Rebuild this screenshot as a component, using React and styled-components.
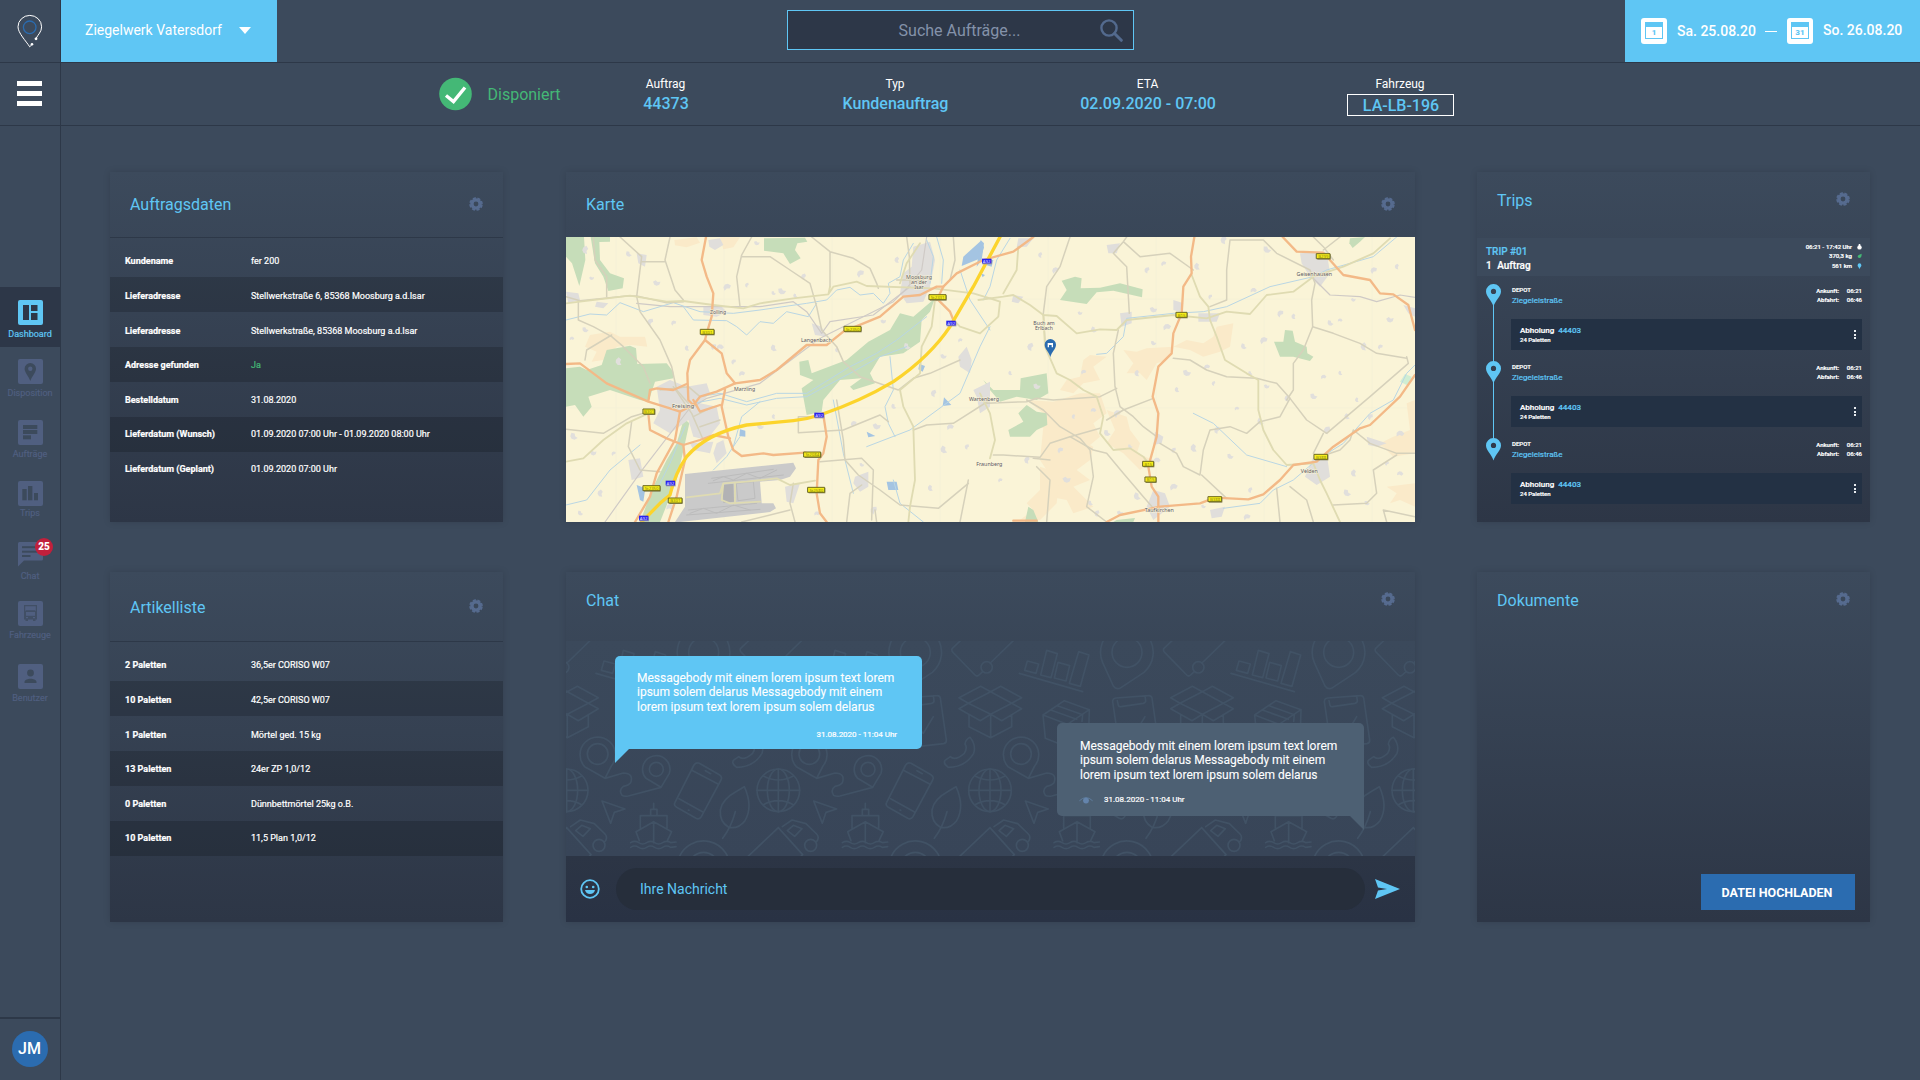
import React from 'react';
import styled, { createGlobalStyle, css } from 'styled-components';

const c = {
  bg: '#3c4a5c',
  line: '#2d3848',
  deep: '#2d3748',
  sky: '#5fc6f4',
  blue: '#2b6cb0',
  green: '#44b876',
  muted: '#505f80',
  gear: '#566b8f',
};

const Global = createGlobalStyle`
  * { box-sizing: border-box; }
  body { margin: 0; background: ${c.bg}; color: #fff; font-family: Roboto, "Liberation Sans", sans-serif; }
  svg { display: block; flex: none; }
`;

/* thickens the smallest type without changing its width */
const crisp = css`-webkit-text-stroke: 0.2px currentColor;`;

/* ---------- shell ---------- */
const Shell = styled.div`display: flex; width: 1920px; height: 1080px; overflow: hidden;`;
const Sidebar = styled.aside`
  width: 61px; flex: none; display: flex; flex-direction: column; border-right: 1px solid ${c.line};
`;
const SideCell = styled.div`
  height: 63px; border-bottom: 1px solid ${c.line}; padding: ${(p) => p.$pad};
`;
const Burger = styled.div`
  width: 25px; height: 25px; display: flex; flex-direction: column; justify-content: space-between;
`;
const BurgerBar = styled.span`height: 5px; background: #fff;`;
const Nav = styled.nav`
  margin-top: 161px; display: grid; grid-template-rows: 60px 61px 61px 61px 59px 63px 60px;
`;
const NavItem = styled.div`
  display: flex; flex-direction: column; align-items: center;
  padding-top: ${(p) => (p.$active ? 13 : 12)}px;
  color: ${(p) => (p.$active ? c.sky : c.muted)};
  background: ${(p) => (p.$active ? c.deep : 'transparent')};
`;
const NavIcon = styled.div`position: relative; width: 25px; height: 25px; margin-left: 1px;`;
const NavLabel = styled.span`
  font-size: 9px; line-height: 12px; margin-top: ${(p) => p.$gap ?? 3}px; white-space: nowrap; ${crisp}
`;
const Badge = styled.span`
  position: absolute; left: 17px; top: -4px; width: 18px; height: 18px; border-radius: 50%;
  background: #c1203c; color: #fff; font-size: 10px; font-weight: 900; line-height: 18px; text-align: center;
`;
const UserCell = styled.div`
  margin-top: auto; height: 63px; border-top: 2px solid ${c.line}; display: flex; justify-content: center; padding: 12px 1px 0 0;
`;
const Avatar = styled.div`
  width: 36px; height: 36px; border-radius: 50%; background: ${c.blue};
  font-size: 16px; font-weight: 500; line-height: 36px; text-align: center;
`;
const Content = styled.div`flex: 1; display: flex; flex-direction: column;`;

/* ---------- top bar ---------- */
const TopBar = styled.header`height: 63px; display: flex; border-bottom: 1px solid ${c.line};`;
const Company = styled.div`
  width: 216px; background: ${c.sky}; display: flex; align-items: center; gap: 17px; padding: 0 0 2px 24px;
  font-size: 14px; white-space: nowrap;
`;
const Search = styled.div`
  margin: 10px 0 0 510px; width: 347px; height: 40px; background: ${c.deep}; border: 1px solid ${c.sky};
  display: flex; align-items: center; padding: 0 10px 0 31px;
`;
const Placeholder = styled.span`flex: 1; text-align: center; font-size: 16px; color: #8492aa;`;
const Dates = styled.div`
  margin-left: auto; width: 295px; background: ${c.sky}; display: flex; padding-left: 16px;
  font-size: 14px; font-weight: 500;
`;
const DateText = styled.span`
  width: ${(p) => p.$w}px; flex: none; line-height: 16px; margin: ${(p) => p.$top}px 0 0 10px; white-space: nowrap;
`;
const Calendar = styled.div`
  width: 26px; height: 26px; margin-top: 18px; border-radius: 3px; background: #fff; padding: 4px; flex: none;
`;
const CalendarSheet = styled.div`
  height: 17px; border: 1px solid ${c.sky}; border-top-width: 5px;
  color: ${c.sky}; font-size: 8px; font-weight: 900; line-height: 11px; text-align: center;
`;
const Dash = styled.span`width: 12px; height: 1px; flex: none; background: #fff; margin: 31px 10px 0 10px;`;

/* ---------- order info ---------- */
const InfoBar = styled.section`
  height: 63px; border-bottom: 1px solid ${c.line};
  display: grid; grid-template-columns: 490px 230px 229px 276px 229px;
`;
const Status = styled.div`
  display: flex; gap: 15.5px; padding: 14px 0 0 378px; color: ${c.green}; font-size: 16px; line-height: 35px;
`;
const InfoCell = styled.div`display: flex; flex-direction: column; align-items: center; padding-top: 14px;`;
const InfoLabel = styled.span`font-size: 12px; line-height: 14px; margin-right: 1px;`;
const InfoValue = styled.span`
  margin-top: 3px; font-size: 16px; font-weight: 500; line-height: 19px; color: ${c.sky}; white-space: nowrap;
  ${(p) => p.$boxed && css`width: 107px; height: 22px; line-height: 21px; border: 1px solid #fff; text-align: center; padding-left: 1px;`}
`;

/* ---------- cards ---------- */
const Board = styled.main`
  padding: 46px 0 0 49px; display: grid; grid-template-columns: 394px 849px 393px; grid-template-rows: 350px 350px;
  column-gap: 62px; row-gap: 50px;
`;
const Card = styled.section`
  width: ${(p) => p.$w}px; display: flex; flex-direction: column;
  background: linear-gradient(#3c4a5c, #2d3646); box-shadow: 0 0 7px rgba(0, 0, 0, 0.13);
`;
const CardHead = styled.div`
  height: ${(p) => p.$h}px; flex: none; display: flex; justify-content: space-between; align-items: flex-start; padding: 0 20px;
`;
const CardTitle = styled.h2`
  margin: 0; font-size: 16px; font-weight: 400; color: ${c.sky}; line-height: ${(p) => p.$lh}px;
`;
const GearBox = styled.span`margin-top: ${(p) => p.$top}px;`;
const Table = styled.div`border-top: 1px solid ${c.line}; font-size: 9px; line-height: 10px; ${crisp}`;
const TableRow = styled.div`
  display: grid; grid-template-columns: 126px 1fr; padding-left: 15px;
  height: ${(p) => (p.$i ? 35 : 39)}px;
  padding-top: ${(p) => (p.$i ? 14 - Math.floor((p.$i - 1) / 2) : 18)}px;
  background: ${(p) => (p.$i % 2 ? 'rgba(0,0,0,0.17)' : 'transparent')};
`;
const RowLabel = styled.span`font-weight: 700;`;
const RowValue = styled.span`color: ${(p) => (p.$ok ? c.green : '#fff')};`;

/* ---------- trips ---------- */
const TripHead = styled.div`
  height: 38px; background: ${c.bg}; display: flex; justify-content: space-between; padding: 0 8px 0 9px;
`;
const TripName = styled.div`
  padding-top: 7px; font-size: 10px; font-weight: 500; line-height: 15px; ${crisp}
  b { display: block; font-weight: 500; color: ${c.sky}; line-height: 13px; }
  span { margin-left: 3px; }
`;
const TripFacts = styled.div`padding-top: 4px; font-size: 6px; font-weight: 500; line-height: 10px; ${crisp}`;
const Fact = styled.div`
  height: ${(p) => p.$h ?? 9}px; display: flex; justify-content: flex-end; align-items: center; gap: 5px;
`;
const Stops = styled.div`padding: 8px 8px 0 9px;`;
const Stop = styled.div`display: flex; height: 77px;`;
const Rail = styled.div`width: 15px; display: flex; flex-direction: column; align-items: center;`;
const RailLine = styled.span`width: 1px; height: 57px; background: ${c.sky}; margin-top: -2px;`;
const StopBody = styled.div`flex: 1; margin-left: 10px;`;
const StopTop = styled.div`display: flex; justify-content: space-between; height: 35px; padding-left: 1px;`;
const StopName = styled.div`
  padding-top: 2px; font-size: 6px; font-weight: 500; line-height: 7px; ${crisp}
  b { display: block; margin-top: 3px; font-size: 8px; font-weight: 400; line-height: 9px; color: ${c.sky}; }
`;
const Times = styled.div`
  display: grid; grid-template-columns: 23px 16px; column-gap: 7px; padding-top: 2px; text-align: right;
  font-size: 6px; font-weight: 500; line-height: 9px; align-content: start; white-space: nowrap; ${crisp}
`;
const Job = styled.div`
  height: 31px; background: #233144; display: flex; justify-content: space-between; padding: 7px 6px 0 9px;
  font-size: 8px; font-weight: 500; line-height: 9px; ${crisp}
`;
const JobNumber = styled.span`color: ${c.sky}; margin-left: 4px;`;
const JobNote = styled.div`font-size: 6px; font-weight: 500; line-height: 7px; margin-top: 1px;`;
const Dots = styled.div`
  display: flex; flex-direction: column; gap: 1.5px; padding-top: 4px;
  i { width: 2px; height: 2px; background: #e8ecf0; }
`;

/* ---------- chat ---------- */
const ChatArea = styled.div`
  position: relative; height: 215px; display: flex; flex-direction: column; padding: 15px 51px 0 49px;
  background: linear-gradient(#3b495b, #384558);
`;
const Wallpaper = styled.svg`position: absolute; inset: 0;`;
const Bubble = styled.div`
  position: relative; width: 307px; height: 93px; border-radius: 5px;
  font-size: 12px; line-height: 14.4px;
  background: ${(p) => (p.$own ? '#4d6073' : c.sky)};
  align-self: ${(p) => (p.$own ? 'flex-end' : 'flex-start')};
  ${(p) => (p.$own
    ? 'border-bottom-right-radius: 0; margin-top: -26px; padding: 16px 22px 0 23px;'
    : 'border-bottom-left-radius: 0; padding: 15px 22px 0 22px;')}
  &::after {
    content: ''; position: absolute; top: 93px; border-top: 14px solid ${(p) => (p.$own ? '#4d6073' : c.sky)};
    ${(p) => (p.$own ? 'right: 0; border-left: 14px solid transparent;' : 'left: 0; border-right: 14px solid transparent;')}
  }
`;
const Line = styled.div`white-space: nowrap; -webkit-text-stroke: 0.1px #fff;`;
const Stamp = styled.div`
  display: flex; align-items: center; gap: 11px; font-size: 8px; line-height: 10px; white-space: nowrap; ${crisp}
  margin-top: ${(p) => (p.$own ? 13 : 16)}px;
  margin-left: -1px;
  ${(p) => !p.$own && 'justify-content: flex-end; padding-right: 3px;'}
`;
const Composer = styled.div`
  height: 66px; background: linear-gradient(#2c3545, #293244); display: flex; align-items: center; padding: 0 15px 0 14px;
`;
const ComposerInput = styled.div`
  width: 749px; height: 42px; margin: 0 10px 0 16px; border-radius: 21px; background: #262e3b; padding-left: 24px;
  color: ${c.sky}; font-size: 14px; line-height: 42px;
`;
const Upload = styled.button`
  margin: auto 15px 12px auto; width: 154px; height: 36px; border: 0; background: ${c.blue}; color: #fff; padding: 0 2px 0 0;
  font: 700 12.5px Roboto, sans-serif;
`;

/* ---------- icons ---------- */
const Gear = () => (
  <svg width="14" height="14" viewBox="-7 -7 14 14" fill="none" stroke={c.gear}>
    <circle r="4.1" strokeWidth="3.4" />
    <circle r="6" strokeWidth="1.6" strokeDasharray="3.1 1.612" transform="rotate(7.700)" />
  </svg>
);
const PinPath = 'M7.5 0A7.4 7.4 0 0 0 0 7.4C0 12.4 5.6 16 7.5 22.6C9.4 16 15 12.4 15 7.4A7.4 7.4 0 0 0 7.5 0ZM7.5 4.8A2.6 2.6 0 1 1 7.5 10A2.6 2.6 0 1 1 7.5 4.8Z';
const Pin = () => (
  <svg width="15" height="23" viewBox="0 0 15 23"><path fillRule="evenodd" fill={c.sky} d={PinPath} /></svg>
);
const Logo = () => (
  <svg width="26" height="34" viewBox="17 14 26 34" fill="none">
    <path d="M36 38.5C38 34.5 41.6 32 41.6 26.8A11.8 11.4 0 1 0 18 26.8C18 33 26 41 29.7 46.8L32 44.5" stroke="#fff" strokeWidth="1" />
    <circle cx="36" cy="38.8" r="1.4" fill="#fff" /><circle cx="32" cy="44.3" r="1.3" fill="#fff" />
    <circle cx="29.7" cy="27.3" r="6.3" stroke={c.blue} strokeWidth="1.3" />
  </svg>
);
const iconShapes = {
  dashboard: <><rect x="5" y="5" width="6" height="15" /><rect x="13" y="5" width="6.5" height="6" /><rect x="13" y="13" width="6.5" height="7" /></>,
  pin: <path fillRule="evenodd" d="M12.3 4a5.7 5.7 0 0 0-5.7 5.7c0 4 4 7 5.7 12.3 1.7-5.3 5.7-8.3 5.7-12.3A5.7 5.7 0 0 0 12.3 4zm0 3.6a2.2 2.2 0 1 1 0 4.4 2.2 2.2 0 0 1 0-4.4z" />,
  list: <><rect x="5" y="5" width="14.3" height="4" /><rect x="5" y="10" width="14.3" height="4" /><rect x="5" y="15.3" width="8" height="4" /></>,
  bars: <><rect x="4.3" y="8" width="4.4" height="11.3" /><rect x="10" y="5" width="4.4" height="14.3" /><rect x="16" y="12" width="4" height="7.3" /></>,
  truck: <path d="M6 4h13v14.5h-1.5V20h-2.5v-1.5h-5V20H7.5v-1.5H6zM7.2 5.2v4.8l1-.8h8.6l1 .8V5.2z" fillRule="evenodd" opacity=".75" />,
  user: <><circle cx="12.5" cy="9" r="3.4" /><path d="M6.5 19v-1c0-2.2 3.5-3.3 6-3.3s6 1.1 6 3.3v1z" /></>,
};
const NavGlyph = ({ kind, active }) => {
  const cut = active ? c.deep : c.bg;
  const base = active ? c.sky : c.muted;
  if (kind === 'chat') {
    return (
      <svg width="25" height="25" viewBox="0 0 25 25">
        <path d="M1.5 0H23.5Q25 0 25 1.5V17Q25 18.5 23.5 18.5H6L0 24.5V1.5Q0 0 1.5 0Z" fill={base} />
        <g fill={cut}><rect x="4" y="4.2" width="17" height="2" /><rect x="4" y="8.7" width="17" height="2" /><rect x="4" y="13" width="8.5" height="2" /></g>
      </svg>
    );
  }
  return (
    <svg width="25" height="25" viewBox="0 0 25 25">
      <rect width="25" height="25" rx="2" fill={base} />
      <g fill={cut}>{iconShapes[kind]}</g>
      {kind === 'truck' && <g fill={base}><rect x="8" y="11" width="9" height="3.8" /><rect x="8" y="16" width="2" height="1.2" /><rect x="15" y="16" width="2" height="1.2" /></g>}
    </svg>
  );
};

/* ---------- chat wallpaper ---------- */
const Motifs = () => (
  <g fill="none" stroke="#415265" strokeWidth="5" strokeLinejoin="round" strokeLinecap="round">
    <path d="M118 340L308 395M142 303L176 312L168 340L134 331ZM200 271L232 281L213 353L182 345ZM234 307L269 317L258 363L223 354ZM296 275L327 285L301 379L268 370Z" />
    <path d="M368 308L400 378Q410 392 424 382L492 337A79 79 0 1 0 368 308Z" /><circle cx="441" cy="277" r="45" />
    <path d="M637 379L572 413L600 430L572 446L636 482L667 463L700 482L760 446L730 430L760 413L697 379L667 395ZM600 430L667 395L730 430L667 463ZM602 465V500L667 533L730 500V465M667 463V533" />
    <path d="M189 465L253 422L328 449L262 493ZM189 465L196 535L264 562L326 520L328 449M262 493L264 562M212 450L290 478M232 437L308 464L306 484" />
    <path d="M408 414L505 407Q514 406 516 414L534 540Q535 549 526 551L427 562Q418 562 417 554L398 425Q398 415 408 414ZM412 422L415 436Q417 441 423 440L490 430Q498 428 497 421L495 408M450 505L465 520L495 470" />
    <path d="M84 620A53 53 0 1 1 164 618L145 655ZM145 655L200 639Q232 640 222 668Q216 676 200 679Q185 690 196 706Q202 710 215 708L313 682M313 682L268 655A41 41 0 1 1 338 640Z" />
    <circle cx="123" cy="582" r="31" /><circle cx="299" cy="628" r="21" />
    <path d="M605 532Q624 555 616 580Q590 622 540 622Q524 612 530 601L546 590Q560 604 588 580Q598 564 590 552Q592 538 605 532Z" />
    <path d="M428 610L488 644Q498 650 493 660L434 770Q428 780 418 775L360 742Q350 736 355 727L412 615Q418 606 428 610ZM404 630L484 672M367 716L440 757M446 632L462 641M395 750L397 751" />
    <circle cx="665" cy="691" r="64" /><ellipse cx="665" cy="691" rx="33" ry="64" />
    <path d="M665 627V755M601 691H729M620 648Q665 672 710 648M620 734Q665 710 710 734" />
    <path d="M563 680Q590 740 565 782Q545 808 516 802Q488 785 491 750Q496 718 540 694ZM536 755Q524 800 498 835" />
    <path d="M136 723L205 747L173 757L162 790Z" />
    <path d="M248 842L238 815L291 785L345 815L332 842M291 785V848M251 805V767H331V805M282 767V748H301V767M291 748V730M222 848Q234 840 246 848T270 848T294 848T318 848T342 848L358 846M222 862Q234 854 246 862T270 862T294 862T318 862T342 862L358 860" />
    <path d="M665 803L552 910Q548 916 554 922L620 990Q626 996 632 990L643 980M666 954L738 884M665 803L738 884M677 800L706 780L748 791L780 822Q788 830 782 842L778 846M692 812L710 796L736 806L714 829Z" />
    <circle cx="655" cy="967" r="17" /><circle cx="762" cy="856" r="18" />
  </g>
);
const ChatWallpaper = () => {
  const tiles = [];
  for (let i = -3; i < 3; i += 1) for (let j = -1; j < 2; j += 1) tiles.push([i, j]);
  return (
    <Wallpaper width="849" height="215" viewBox="-1242 243 2547 645">
      {tiles.map(([i, j]) => <g key={`${i},${j}`} transform={`translate(${i * 635} ${j * 645})`}><Motifs /></g>)}
    </Wallpaper>
  );
};

/* ---------- map ---------- */
const map = {
  sand: ['M343 240L410 232L420 248L380 262L345 256ZM480 232H540L520 262L490 268Z', 'M90 525L150 515L180 530L255 530L262 560L215 555L170 560L130 600L95 605L110 575L75 560Z', 'M1400 720L1480 725L1560 700L1620 700L1640 760L1600 790L1620 830L1560 880L1530 835L1480 850L1470 810L1440 800L1450 760Z', 'M1450 800L1520 820L1600 860L1590 900L1550 930L1590 960L1540 980L1600 1040L1540 1060L1520 1020L1470 1010L1480 960L1440 900Z', 'M1640 750L1700 770L1710 810L1740 850L1730 880L1780 900L1740 930L1690 880L1640 850L1665 810Z', 'M1690 570L1730 575L1760 565L1840 560L1820 600L1790 610L1760 660L1740 640L1700 640L1720 610ZM1840 560L1880 540L1930 550L1960 530L1970 500L2020 490L2010 560L1980 575L1930 590L1890 570Z', 'M1570 600L1590 585L1640 590L1600 620L1620 660L1570 670L1540 700L1500 690L1520 660L1560 650ZM1320 690L1380 700L1310 720Z', 'M1440 920L1500 940L1490 1030L1470 1050L1440 1080H1380L1420 1050L1400 1030L1440 990Z', 'M2540 730L2565 720V880L2500 890L2470 860L2420 850L2470 845L2500 830L2550 810ZM2480 980L2565 970V1040L2520 1020L2490 1030L2510 1000Z'],
  forest: ['M18 231H72L76 300L58 378L36 310L18 290Z', 'M92 231H150V245L118 246L120 300L150 340L192 355L188 385L145 393L130 350L105 310Z', 'M612 235L735 233L742 245L712 250L705 270L722 295L690 312L670 280L612 272Z', 'M18 625L60 620L80 630L125 615L140 570L210 557L228 565L232 612L320 610L340 635V655L285 665L265 725L240 720L150 690L85 710L95 740L70 770L45 735L18 740Z', 'M718 605L745 600L755 640L860 600L925 545L990 510L1020 460L1060 470L1125 415L1110 455L1085 480L1080 545L1030 580L960 590L930 640L945 670L880 690L870 680L905 655L840 660L790 720L785 755L740 765L725 685L760 660L720 645Z', 'M372 775L388 790L375 850L350 960L300 1086H240L280 980L320 900L350 850Z', 'M1505 362L1545 350L1565 355L1562 385L1620 383L1680 370L1748 388L1746 412L1660 392L1610 397L1580 432L1500 420L1520 390Z', 'M1270 660L1300 690L1340 690L1380 690L1382 655L1460 640L1465 700L1430 720L1370 710L1320 725L1290 690Z', 'M1375 760L1400 735L1430 755L1460 760L1462 795L1430 810L1410 830L1350 830L1345 810L1390 785Z', 'M2142 545L2170 545L2175 510L2198 512L2205 545L2240 560L2242 580L2260 590L2250 603L2200 590L2160 590Z', 'M2370 235L2415 231L2400 245L2378 264L2368 250Z', 'M1405 1040L1420 1050L1435 1086H1395ZM1670 1080L1725 1074L1720 1086H1660Z'],
  urban: ['M445 240L480 235L490 255L465 270L448 260ZM230 280L260 285L255 320L235 310Z', 'M1060 260L1110 245L1125 300L1110 380L1090 425L1040 430L1020 400L1030 340L1055 320Z', 'M290 680L330 660L380 680L440 670L450 700L420 730L470 740L480 790L440 840L400 830L385 780L330 820L280 790L300 750Z', 'M755 490L785 500L800 530L765 525ZM430 440L480 435L500 455L470 470L430 465ZM470 850L490 840L500 880L470 910L460 880ZM205 900L240 895L250 950L215 960Z', 'M1195 590L1220 560L1235 600L1230 640L1200 620ZM1240 690L1290 665L1290 740L1260 760L1250 710Z', 'M2220 280L2300 275L2310 340L2280 380L2250 350L2225 310Z', 'M2260 890L2300 880L2310 950L2270 975L2235 950Z', 'M1780 990L1815 1000L1830 1040L1780 1080L1760 1040ZM1950 1050L1995 1040L1985 1070L1955 1075Z', 'M1680 460L1715 455L1715 490L1685 500ZM1915 460L1980 460L1970 485L1915 485ZM1640 255L1680 250L1670 280L1645 280ZM1375 235L1420 235L1400 260L1370 262Z', 'M1785 815L1810 830L1805 850L1780 855ZM2420 830L2480 850L2450 860L2425 855ZM885 950L925 935L925 980L900 995L880 970ZM675 980L720 970L700 1030L680 1025ZM390 850L460 845L450 880L400 870Z', 'M18 395L55 400L60 420L25 430ZM110 425L145 430L130 445L105 440ZM1360 405L1390 410L1375 430L1355 425ZM1840 420L1870 430L1860 455L1840 450ZM2530 435L2565 445V470L2545 460Z'],
  airport: ['M375 942L700 908L708 925L690 950L660 960L600 965L605 1030L640 1030L648 1045L630 1056L360 1086H345L375 1040Z'],
  lake: ['M1210 290L1262 243L1272 262L1262 295L1205 318ZM230 975L256 985L250 1025L240 1020ZM540 808L556 812V830L538 828ZM1152 712L1174 735L1148 738ZM920 815L946 828L925 832ZM980 965L1010 965L1015 990L985 990ZM1078 612L1095 618L1088 635L1075 628ZM1285 298L1300 300L1295 320L1280 316ZM1262 340L1275 345L1268 352Z', 'M1262 240L1272 250L1265 300L1250 320Z'],
  rail: ['M135 1086L250 925L385 750L440 715L600 670L780 535L1000 425L1040 385L1085 330L1100 231', 'M230 430L330 440H600L700 425L740 455L785 520L810 485L940 465L1050 380', 'M2250 345L2310 405L2400 410L2450 425L2520 405L2565 412'],
  stream: ['M18 480L90 462L140 465L180 428L250 455L340 428L420 455L520 460L600 450L740 430L800 420L830 390L870 382L900 405L940 400L970 430L990 400L985 370L1020 350L1030 300L1060 250', 'M18 1035L80 1020L150 930L240 855', 'M370 440L400 480L500 482L530 500L560 525L600 485L640 490L680 455L745 470L770 430', 'M420 710L480 700L560 725L650 700L740 700L870 620L950 580L1010 540L1100 470', 'M400 730L480 715L560 735L650 715L740 710L870 640L960 590L1040 560', 'M1100 240L1120 290L1110 370M1130 231L1150 300L1145 370', 'M2510 231L2440 290L2300 330L2260 350L2130 380L2000 440L1930 455L1840 460L1700 475L1690 530L1640 580L1610 583', 'M2565 615L2540 640L2500 720L2430 760L2350 850L2270 900L2200 960L2140 990L2100 1030L1990 1045', 'M1900 760L1960 790L2060 885L2180 920', 'M990 590L1000 690L975 740L985 790L1005 830M1290 500L1260 560L1200 700L1050 810L920 860M520 860L545 770L600 725', 'M1200 330L1230 420L1290 510M1350 235L1310 300L1290 380L1270 420M1000 960L1020 1030L1090 1086M880 1000L850 880L820 720', 'M290 990L330 910L375 800M460 930L500 890L540 830'],
  minor: ['M18 410L60 422L200 408L230 408L320 428L370 425', 'M180 231L245 290L230 410L240 455L300 540L335 620L350 690L385 730', 'M330 231L315 300L345 390L370 420M245 305H315M100 231L105 300L140 350V410', 'M575 231L545 285L530 350L540 440M545 290L630 290L690 330L750 370L770 440L785 510', 'M755 231L810 275L880 295L930 325L950 370L955 385M810 275V380', 'M55 422L55 480L100 500L155 530L190 560L250 620L270 670', 'M155 525L80 570L75 600M18 808L130 820L215 770L265 755M215 785L205 860L240 930L300 935', 'M785 510L830 560L850 605L900 650L1015 690L1060 655L1110 640L1200 600', 'M830 720L840 780L850 840L855 900L895 945L960 990L1020 1035L1135 1045L1225 970M780 905L905 895L940 930L935 1080', 'M715 770H790M715 770V818L850 810L960 765L985 785M1060 810L1100 795L1180 790L1290 720', 'M905 975L870 1000L860 1086M700 970L690 1030L705 1086M545 1086L690 1050M1200 1086L1225 960', 'M1040 231L1048 290L1050 370M1010 360H1090M1180 231L1185 300L1170 360', 'M1530 231L1500 320L1460 380L1450 460L1455 540M1700 231L1690 245L1660 280L1700 320L1708 460M1690 245L1740 290L1830 280L1900 330', 'M2010 240L2000 330L2000 420L1950 440M2010 240L2110 240L2150 280L2250 330L2265 370L2255 420L2258 500L2230 570L2200 610L2200 690L2180 720', 'M2258 500L2320 520L2400 550L2450 580L2540 595M1840 595L1890 600L1940 630L2000 650L2090 655L2150 670L2190 715L2240 780L2300 820L2430 710L2545 610L2540 590', 'M1300 885L1330 885L1440 892L1470 850L1530 830L1600 870L1640 880L1690 940L1750 1010L1780 1045M1280 730L1400 725L1430 715L1480 720L1620 710L1670 685', 'M1675 510L1660 580L1665 680L1680 740L1720 770L1750 800L1790 830M1640 780L1690 750L1780 715M1400 720L1450 750L1500 800L1560 835L1590 870L1600 950L1580 1040L1640 1086M1530 830L1620 805', 'M1800 850L1850 880L1870 920L1920 945L1930 870L1950 810L2010 800L2060 820L2100 785L2160 770L2190 715', 'M1925 945L2000 1015M2150 985L2160 1086M2190 980L2240 1020L2260 1086M2280 890L2340 870L2370 840L2380 810L2430 850L2510 880H2565M2320 1035L2420 1030L2450 1000L2440 930L2510 885M1470 900L1420 895M1460 1086L1470 960L1430 920', 'M300 690L385 680L420 710M340 680L395 760L430 840M400 770L460 740M420 800L480 780M950 1086L945 1050M2320 300L2290 260L2260 231M2290 270L2340 231M2290 820L2260 880M2480 1086L2470 1050L2565 1070'],
  yellow: ['M18 430L60 425L210 407L320 425L370 423L460 435L550 445L600 430L700 415L805 403L820 380L890 365L920 378L1120 385L1240 400L1290 415M805 403L810 380', 'M18 905L70 895L130 840L200 790L265 760', 'M1255 420L1330 410L1360 405L1410 435L1450 465L1490 468L1550 520L1620 508L1670 510L1700 480L1840 465L1940 475L2000 455L2070 462L2120 405L2200 395L2260 350L2350 320L2440 280L2490 235', 'M1450 465L1455 560L1490 640L1530 660L1570 690L1610 710L1630 770L1620 820L1660 870L1710 865L1750 890L1765 910', 'M1895 345L1920 410L1945 440L1950 480L1970 530L1995 600L2060 640L2095 660L2095 750L2110 810L2140 870L2180 915L2260 910L2280 960L2300 1000L2340 1086', 'M1290 415L1320 425L1315 470L1260 520L1200 500L1180 480M1125 420L1115 500L1085 560L1080 640L1020 690L1030 740L1060 800L1065 960L1050 1040L1045 1086', 'M1260 700L1290 760L1305 840L1290 895M1375 260L1370 330L1330 400M1080 250L1040 310L1020 370', 'M380 1012L480 1000L490 970L560 965L650 955L690 975L765 962M490 970L485 1020L510 1030L600 1025M525 968V1030'],
  orange: ['M438 231L425 300L440 350L460 400L455 470L440 520L435 540L390 600L382 640L385 720L400 735', 'M435 540L485 580L500 640L525 670L600 660L650 630L740 555L800 555L850 515L960 470L1030 410L1080 405L1130 380L1150 380L1190 340L1270 300L1360 275L1420 231', 'M18 612L60 610L140 670L265 725L330 745L360 755L400 735L420 710L470 695L525 670M265 725L270 690L290 685L340 690L380 672', 'M400 720L420 755L480 735M495 690L485 740L505 830L520 870L545 888L610 880L640 885L735 878L760 885M790 765L800 830L790 880L775 900L770 1000L780 1060L800 1086', 'M265 760L270 810L320 835L370 855L420 840L460 825L510 835M360 755L345 840L290 940L270 1010L225 1086M370 855L375 900L350 1010L325 1086', 'M1130 415L1170 455L1180 480M1150 380L1130 420', 'M1903 231L1893 290L1895 340L1870 380L1865 460L1840 520L1835 580L1795 620L1778 710L1795 760L1790 830L1765 920L1775 980L1795 1010V1086', 'M2168 231L2210 275L2290 278L2350 345L2430 360L2460 400L2500 403L2545 435L2565 510', 'M1640 1086L1680 1065L1800 1040L1920 1030L1965 1013L2065 1018L2110 1003L2160 960L2200 915L2270 905L2320 860L2400 805L2430 795L2520 710L2565 645', 'M1360 1082H1430'],
  motorway: ['M245 1086L300 1030L330 1005Q345 940 380 890Q440 820 560 795L700 782Q740 778 780 765Q900 725 1000 665Q1110 590 1170 500L1240 380L1320 231'],
};
const roadStyles = [
  ['rail', '#cfcac6', 3.5], ['stream', '#b9d6e4', 3], ['minor', '#d6d1bb', 4.5], ['yellow', '#dfdbb2', 5.5], ['orange', '#f3b987', 7], ['motorway', '#fcd42c', 10],
];
const hamlets = [[95,355],[205,283],[75,270],[340,488],[290,370],[705,408],[730,350],[500,380],[590,250],[640,565],[560,375],[545,640],[665,395],[380,565],[270,485],[35,535],[75,510],[175,605],[520,605],[480,560],[640,400],[1010,300],[900,340],[970,485],[1040,560],[830,570],[880,790],[950,800],[1000,740],[1120,700],[1200,540],[1150,590],[1150,870],[1220,860],[1170,800],[905,915],[1110,985],[940,1050],[770,1060],[600,800],[640,770],[460,560],[330,1040],[60,1060],[120,1000],[160,880],[100,880],[40,830],[1440,285],[1485,330],[1560,460],[1600,510],[1410,560],[1570,635],[1430,680],[1350,640],[1760,330],[1820,500],[1780,550],[1910,320],[1950,410],[2080,390],[2120,270],[2200,470],[2160,460],[2340,480],[2310,490],[2410,560],[2460,560],[2490,480],[2070,640],[2180,715],[2110,540],[2120,680],[2100,785],[1960,670],[1940,620],[1880,640],[1850,690],[1970,810],[2030,745],[2010,890],[1900,865],[1840,870],[1790,900],[1710,860],[1730,640],[1670,760],[1600,750],[1640,820],[1540,770],[1500,870],[1520,960],[1590,1030],[1400,900],[1320,960],[1680,1060],[1730,1010],[2070,990],[2060,1070],[1930,1040],[2360,770],[2300,810],[2290,650],[2260,710],[2390,720],[2430,770],[2520,820],[2420,1030],[2380,940],[2480,910],[2520,940],[2360,1000],[2510,320],[2440,330],[2380,420],[2050,560],[1990,240],[1810,310],[1780,450],[2340,640],[1610,1060],[1840,980]];
const places = [
  ['Zolling', 474, 462, 15], ['Langenbach', 769, 545, 16], ['Marzling', 554, 693, 15.5], ['Freising', 369, 745, 18], ['Moosburg', 1077, 358, 16], ['an der', 1077, 373, 16], ['Isar', 1077, 388, 16],
  ['Wartenberg', 1272, 723, 16], ['Fraunberg', 1288, 919, 16], ['Buch am', 1452, 495, 15.5], ['Erlbach', 1452, 510, 15.5], ['Geisenhausen', 2263, 349, 16], ['Velden', 2248, 939, 16], ['Taufkirchen', 1798, 1055, 16],
];
const shields = [
  ['B301', 442, 516, 40], ['St2350', 878, 507, 50], ['St2331', 1133, 412, 50], ['B301', 267, 755, 34], ['St2084', 757, 884, 50], ['St2350', 275, 985, 50], ['B301', 346, 1022, 40], ['St2580', 769, 990, 50],
  ['B15', 1865, 465, 32], ['B15', 1765, 912, 32], ['B15', 1772, 959, 32], ['B388', 1965, 1018, 40], ['B388', 2283, 891, 40], ['B299', 2290, 289, 40],
];
const motorwayShields = [['A92', 777, 766], ['A92', 331, 970], ['A92', 251, 1075], ['A92', 1173, 490], ['A92', 1280, 304]];

const MapView = () => (
  <svg width="849" height="285" viewBox="18 231 2547 855" strokeLinejoin="round" strokeLinecap="round">
    <rect x="18" y="231" width="2547" height="855" fill="#faf4d7" />
    <path d="M18 418H2565M18 743H2565M168 231V1086M492 231V1086M817 231V1086M1141 231V1086M1465 231V1086M1789 231V1086M2113 231V1086M2437 231V1086" stroke="#f5f0d8" strokeWidth="2" />
    {map.sand.map((d) => <path key={d} d={d} fill="#faeac9" />)}
    {map.forest.map((d) => <path key={d} d={d} fill="#c6ddb9" />)}
    {map.urban.map((d) => <path key={d} d={d} fill="#e0dedb" />)}
    {hamlets.map(([x, y], i) => (
      <path key={`${x},${y}`} transform={`translate(${x} ${y}) rotate(${(i * 47) % 180}) scale(${0.7 + ((i * 7) % 5) * 0.12})`} d="M-11 -3L-4 -8L2 -4L10 -6L8 3L1 7L-6 5Z" fill="#e1dfdc" />
    ))}
    {map.airport.map((d) => <path key={d} d={d} fill="#cacaca" />)}
    <path d="M455 955L640 928M445 970L670 945M460 962L490 950L520 960L560 940L600 955L650 930M385 1050L590 1030M380 1065L600 1048M390 1060L430 1045L470 1060L520 1035L570 1050M530 970L580 965L585 1015L535 1022Z" stroke="#bcbcbc" strokeWidth="3" fill="none" />
    <path d="M487 975L520 971L522 1025L490 1028Z" fill="#b2b2b4" />
    <path d="M2520 665L2535 642L2555 650L2545 677Z" fill="#d0eed3" />
    {map.lake.map((d) => <path key={d} d={d} fill="#a4c4e2" />)}
    {roadStyles.map(([kind, stroke, w]) => map[kind].map((d) => <path key={kind + d} d={d} fill="none" stroke={stroke} strokeWidth={w} />))}
    <g fontFamily="'Noto Sans', 'Open Sans', sans-serif" textAnchor="middle" fill="#5b5866">
      {places.map(([t, x, y, s]) => <text key={t + x} x={x} y={y} fontSize={s} stroke="#faf4d7" strokeWidth="3" paintOrder="stroke">{t}</text>)}
    </g>
    <g fontFamily="'Noto Sans', 'Open Sans', sans-serif" textAnchor="middle" fontSize="13">
      {shields.map(([t, x, y, w]) => (
        <g key={`${x}${y}`}>
          <rect x={x - w / 2 + 2} y={y - 6} width={w} height="16" fill="#8d8a68" />
          <rect x={x - w / 2} y={y - 8} width={w} height="15" fill="#f6ee1a" stroke="#6e6a1c" strokeWidth="3" />
          <text x={x} y={y + 4.5} fill="#8a8412">{t}</text>
        </g>
      ))}
      {motorwayShields.map(([t, x, y]) => (
        <g key={`${x}${y}`}>
          <rect x={x - 13} y={y - 6} width="29" height="15" fill="#9a9aa8" />
          <rect x={x - 14} y={y - 8} width="28" height="14" fill="#2a22ee" />
          <text x={x} y={y + 4} fill="#dcdcff">{t}</text>
        </g>
      ))}
    </g>
    <path d="M1471 537A17 17 0 0 0 1454 554C1454 567 1467 575 1471 591C1475 575 1488 567 1488 554A17 17 0 0 0 1471 537Z" fill={c.blue} />
    <path d="M1463 562V549H1479V562H1475V555H1467V562Z" fill="#fff" />
  </svg>
);

/* ---------- data ---------- */
const nav = [
  ['Dashboard', 'dashboard'], ['Disposition', 'pin'], ['Aufträge', 'list'], ['Trips', 'bars', 1], ['Chat', 'chat'], ['Fahrzeuge', 'truck'], ['Benutzer', 'user'],
];
const info = [['Auftrag', '44373'], ['Typ', 'Kundenauftrag'], ['ETA', '02.09.2020 - 07:00'], ['Fahrzeug', 'LA-LB-196']];
const order = [
  ['Kundename', 'fer 200'], ['Lieferadresse', 'Stellwerkstraße 6, 85368 Moosburg a.d.Isar'], ['Lieferadresse', 'Stellwerkstraße, 85368 Moosburg a.d.Isar'],
  ['Adresse gefunden', 'Ja'], ['Bestelldatum', '31.08.2020'], ['Lieferdatum (Wunsch)', '01.09.2020 07:00 Uhr - 01.09.2020 08:00 Uhr'], ['Lieferdatum (Geplant)', '01.09.2020 07:00 Uhr'],
];
const articles = [
  ['2 Paletten', '36,5er CORISO W07'], ['10 Paletten', '42,5er CORISO W07'], ['1 Paletten', 'Mörtel ged. 15 kg'], ['13 Paletten', '24er ZP 1,0/12'],
  ['0 Paletten', 'Dünnbettmörtel 25kg o.B.'], ['10 Paletten', '11,5 Plan 1,0/12'],
];
const message = ['Messagebody mit einem lorem ipsum text lorem', 'ipsum solem delarus Messagebody mit einem', 'lorem ipsum text lorem ipsum solem delarus'];

const Head = ({ title, h, lh, gear }) => (
  <CardHead $h={h}><CardTitle $lh={lh}>{title}</CardTitle><GearBox $top={gear}><Gear /></GearBox></CardHead>
);
const DataTable = ({ rows }) => (
  <Table>
    {rows.map(([k, v], i) => (
      <TableRow key={i} $i={i}><RowLabel>{k}</RowLabel><RowValue $ok={v === 'Ja'}>{v}</RowValue></TableRow>
    ))}
  </Table>
);
const CalendarIcon = ({ day }) => <Calendar><CalendarSheet>{day}</CalendarSheet></Calendar>;

export default function App() {
  return (
    <Shell>
      <Global />
      <Sidebar>
        <SideCell $pad="14px 0 0 17px"><Logo /></SideCell>
        <SideCell $pad="18px 0 0 17px"><Burger><BurgerBar /><BurgerBar /><BurgerBar /></Burger></SideCell>
        <Nav>
          {nav.map(([label, kind, gap], i) => (
            <NavItem key={label} $active={i === 0}>
              <NavIcon><NavGlyph kind={kind} active={i === 0} />{kind === 'chat' && <Badge>25</Badge>}</NavIcon>
              <NavLabel $gap={gap}>{label}</NavLabel>
            </NavItem>
          ))}
        </Nav>
        <UserCell><Avatar>JM</Avatar></UserCell>
      </Sidebar>
      <Content>
        <TopBar>
          <Company>
            Ziegelwerk Vatersdorf
            <svg width="12" height="7" viewBox="0 0 12 7"><path d="M0 0H12L6 7Z" fill="#fff" /></svg>
          </Company>
          <Search>
            <Placeholder>Suche Aufträge...</Placeholder>
            <svg width="23" height="23" viewBox="0 0 23 23" fill="none" stroke="#536a8e">
              <circle cx="9" cy="9" r="7.6" strokeWidth="2.4" /><path d="M14.5 14.5L21.3 21.3" strokeWidth="3" strokeLinecap="round" />
            </svg>
          </Search>
          <Dates>
            <CalendarIcon day="1" /><DateText $w={78} $top={23}>Sa. 25.08.20</DateText>
            <Dash />
            <CalendarIcon day="31" /><DateText $w={80} $top={22}>So. 26.08.20</DateText>
          </Dates>
        </TopBar>
        <InfoBar>
          <Status>
            <svg width="33" height="34" viewBox="0 0 33 34"><circle cx="16.500" cy="17" r="16.300" fill={c.green} /><path d="M7 18.500L14.500 24.500L26 10.500" fill="none" stroke="#fff" strokeWidth="3.400" /></svg>
            Disponiert
          </Status>
          {info.map(([k, v]) => <InfoCell key={k}><InfoLabel>{k}</InfoLabel><InfoValue $boxed={k === 'Fahrzeug'}>{v}</InfoValue></InfoCell>)}
        </InfoBar>
        <Board>
          <Card $w={393}><Head title="Auftragsdaten" h={65} lh={65} gear={25} /><DataTable rows={order} /></Card>
          <Card $w={849}><Head title="Karte" h={65} lh={65} gear={25} /><MapView /></Card>
          <Card $w={393}>
            <Head title="Trips" h={66} lh={57} gear={20} />
            <TripHead>
              <TripName><b>TRIP #01</b>1 <span>Auftrag</span></TripName>
              <TripFacts>
                <Fact>06:21 - 17:42 Uhr <svg width="5" height="6" viewBox="0 0 5 6"><circle cx="2.500" cy="3.400" r="2.200" fill="#fff" /><rect x="1.700" width="1.600" height="2" fill="#fff" /></svg></Fact>
                <Fact>370,3 kg <svg width="5" height="6" viewBox="0 0 5 6"><path d="M4.600 .8C4.800 3.600 4 5 2.400 5C1 5 .4 4 .8 3C1.300 1.800 3 1.800 4.600 .8Z" fill={c.green} /></svg></Fact>
                <Fact $h={11}>561 km <svg width="5" height="6" viewBox="0 0 5 6"><path d="M2.500 .3A2 2 0 0 0 .6 2.200C.6 3.600 2 4.300 2.500 6C3 4.300 4.400 3.600 4.400 2.200A2 2 0 0 0 2.500 .3Z" fill={c.sky} /></svg></Fact>
              </TripFacts>
            </TripHead>
            <Stops>
              {[0, 1, 2].map((i) => (
                <Stop key={i}>
                  <Rail><Pin />{i < 2 && <RailLine />}</Rail>
                  <StopBody>
                    <StopTop>
                      <StopName>DEPOT<b>Ziegeleistraße</b></StopName>
                      <Times><span>Ankunft:</span><span>06:21</span><span>Abfahrt:</span><span>06:46</span></Times>
                    </StopTop>
                    <Job>
                      <div>Abholung<JobNumber>44403</JobNumber><JobNote>24 Paletten</JobNote></div>
                      <Dots><i /><i /><i /></Dots>
                    </Job>
                  </StopBody>
                </Stop>
              ))}
            </Stops>
          </Card>
          <Card $w={393}><Head title="Artikelliste" h={69} lh={71} gear={27} /><DataTable rows={articles} /></Card>
          <Card $w={849}>
            <Head title="Chat" h={69} lh={57} gear={20} />
            <ChatArea>
              <ChatWallpaper />
              <Bubble>{message.map((m) => <Line key={m}>{m}</Line>)}<Stamp>31.08.2020 - 11:04 Uhr</Stamp></Bubble>
              <Bubble $own>
                {message.map((m) => <Line key={m}>{m}</Line>)}
                <Stamp $own>
                  <svg width="14" height="7" viewBox="0 0 14 7"><path d="M.4 3.800Q7 -2.600 13.600 3.800" fill="none" stroke="#5f7d9e" /><circle cx="7" cy="3.600" r="2.900" fill="#6484ac" /></svg>
                  31.08.2020 - 11:04 Uhr
                </Stamp>
              </Bubble>
            </ChatArea>
            <Composer>
              <svg width="20" height="20" viewBox="0 0 20 20"><circle cx="10" cy="10" r="8.800" fill="none" stroke={c.sky} strokeWidth="1.800" /><circle cx="6.800" cy="8" r="1.300" fill={c.sky} /><circle cx="13.200" cy="8" r="1.300" fill={c.sky} /><path d="M5 11H15Q14 15 10 15T5 11Z" fill={c.sky} /></svg>
              <ComposerInput>Ihre Nachricht</ComposerInput>
              <svg width="25" height="20" viewBox="0 0 25 20"><path d="M0 0L25 10L0 20L3 11.500L12 10L3 8.500Z" fill={c.sky} /></svg>
            </Composer>
          </Card>
          <Card $w={393}><Head title="Dokumente" h={66} lh={57} gear={20} /><Upload>DATEI HOCHLADEN</Upload></Card>
        </Board>
      </Content>
    </Shell>
  );
}
